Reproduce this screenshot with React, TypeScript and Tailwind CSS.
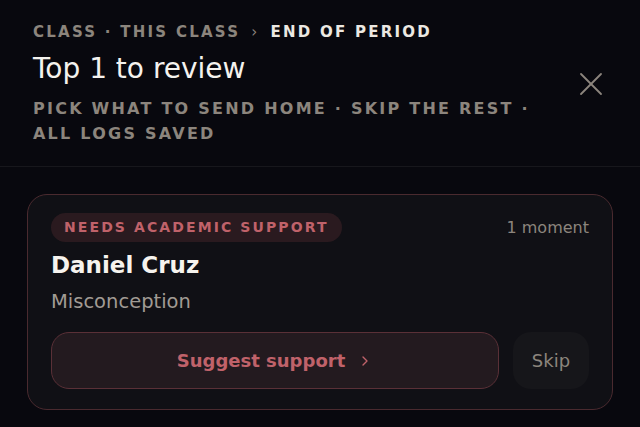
import { X, ChevronRight } from 'lucide-react';

export default function App() {
  return (
    <div
      className="w-[640px] h-[427px] overflow-hidden bg-[#08080e] text-white"
      style={{ fontFamily: '"DejaVu Sans", sans-serif' }}
    >
      {/* Header */}
      <div className="flex items-start justify-between pl-[33px] pr-[29px] pt-[21px] pb-[20px] border-b border-[#17171c]">
        <div>
          <div className="flex items-center text-[15px] font-bold tracking-[0.15em] leading-[22px]">
            <span className="text-[#8c857d]">CLASS · THIS CLASS</span>
            <span className="text-[#8c857d] font-normal mx-[11px]">›</span>
            <span className="text-[#ece8e2]">END OF PERIOD</span>
          </div>
          <h1 className="text-[28px] leading-[34px] mt-[9px] text-[#f4f2ee]">Top 1 to review</h1>
          <p className="mt-[10px] text-[16px] font-bold tracking-[0.14em] leading-[25px] text-[#8c857d] w-[505px]">
            PICK WHAT TO SEND HOME · SKIP THE REST · ALL LOGS SAVED
          </p>
        </div>
        <button className="mt-[43px] text-[#8c857d]">
          <X size={40} strokeWidth={1.1} />
        </button>
      </div>

      {/* Card */}
      <div className="px-[27px] pt-[27px]">
        <div className="rounded-[20px] border border-[#4a2a2f] bg-[#101015] px-[23px] pt-[18px] pb-[20px]">
          <div className="flex items-center justify-between">
            <span className="rounded-full bg-[#2a1a1f] px-[13px] py-[5px] text-[14px] leading-[19px] font-bold tracking-[0.15em] text-[#c0626a]">
              NEEDS ACADEMIC SUPPORT
            </span>
            <span className="text-[16px] text-[#8c857d]">1 moment</span>
          </div>
          <div className="mt-[9px] text-[23px] font-bold text-[#f6f3ee] leading-[28px]">Daniel Cruz</div>
          <div className="mt-[11px] text-[19.5px] text-[#a19b94] leading-[24px]">Misconception</div>
          <div className="mt-[18px] flex gap-[14px]">
            <button className="flex-1 h-[57px] rounded-[18px] border border-[#5a3037] bg-[#231a1f] flex items-center justify-center gap-[12px] text-[18px] font-bold text-[#c0626a]">
              Suggest support
              <ChevronRight size={16} strokeWidth={2} />
            </button>
            <button className="w-[76px] h-[57px] rounded-[18px] bg-[#16161a] text-[18px] text-[#8c857d]">
              Skip
            </button>
          </div>
        </div>
      </div>
    </div>
  );
}
